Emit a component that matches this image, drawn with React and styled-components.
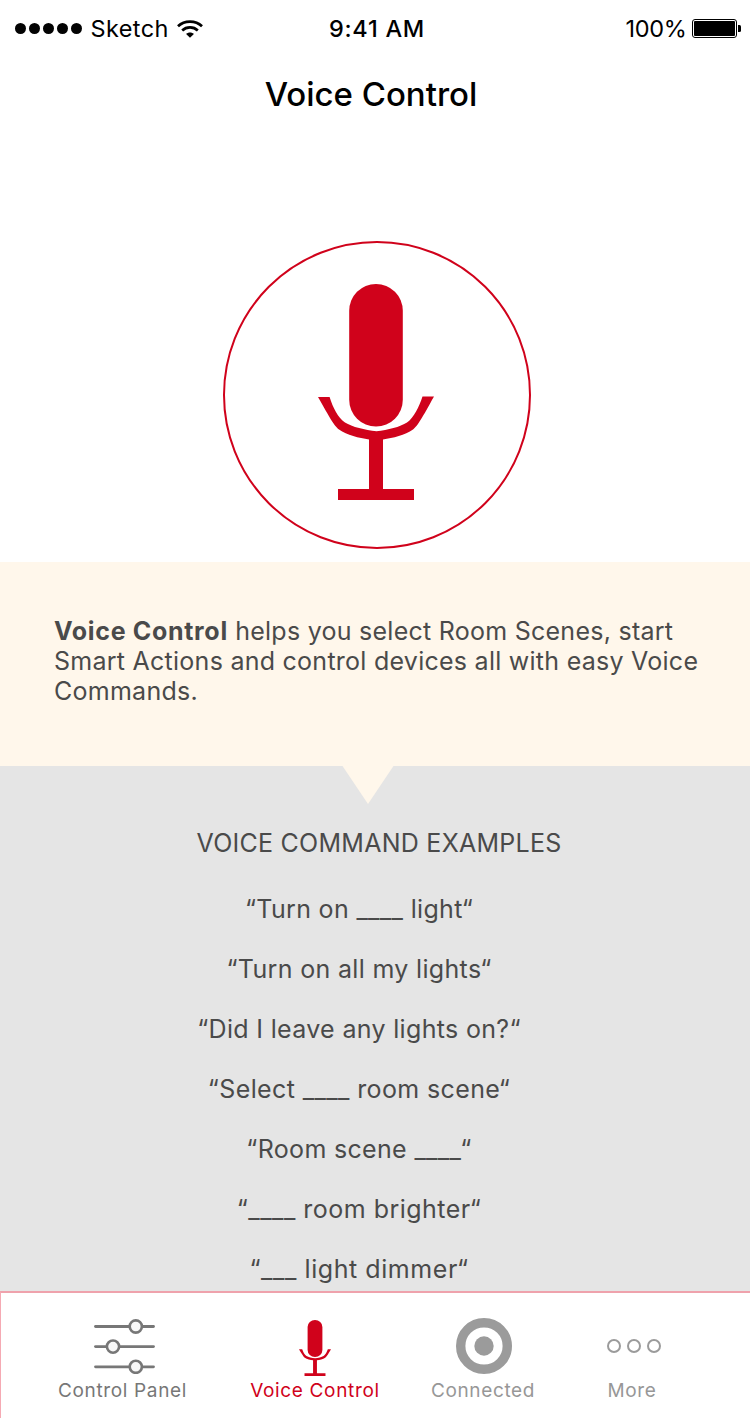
import React from "react";
import styled, { createGlobalStyle } from "styled-components";

const RED = "#d0021b";

const GlobalStyle = createGlobalStyle`
  * { box-sizing: border-box; }
  body { margin: 0; background: #fff; }
`;

const Screen = styled.div`
  width: 750px;
  height: 1418px;
  display: flex;
  flex-direction: column;
  overflow: hidden;
  background: #fff;
  color: #4a4a4a;
  font-family: Inter, "Liberation Sans", sans-serif;
`;

const StatusBar = styled.header`
  height: 57px;
  display: grid;
  grid-template-columns: 1fr auto 1fr;
  align-items: center;
  padding: 0 9px 0 15px;
  color: #000;
  font-size: 23.5px;
  line-height: 30px;
`;

const StatusGroup = styled.div`
  display: flex;
  align-items: center;
  justify-content: ${(p) => (p.$end ? "flex-end" : "flex-start")};
`;

const Signal = styled.div`
  display: flex;
  gap: 3px;
  margin-right: 8.5px;
`;

const SignalDot = styled.span`
  width: 11px;
  height: 11px;
  border-radius: 50%;
  background: #030303;
`;

const Carrier = styled.span`
  letter-spacing: 0.4px;
  margin-right: 8px;
`;

const Clock = styled.div`
  padding-right: 2px;
  font-weight: 550;
  letter-spacing: 0.75px;
`;

const Percent = styled.span`
  margin-right: 5.5px;
  letter-spacing: -0.3px;
`;

const Title = styled.h1`
  margin: 17px 0 0;
  padding-right: 8px;
  text-align: center;
  color: #000;
  font-size: 33px;
  font-weight: 550;
  line-height: 40px;
  letter-spacing: 0;
`;

const Hero = styled.section`
  height: 448px;
  display: flex;
  justify-content: center;
  align-items: flex-end;
  padding: 0 0 13px 4px;
`;

const MicButton = styled.button`
  width: 308px;
  height: 308px;
  display: flex;
  justify-content: center;
  align-items: flex-start;
  padding: 41px 2px 0 0;
  border: 2px solid ${RED};
  border-radius: 50%;
  background: none;
`;

const Intro = styled.section`
  position: relative;
  height: 204px;
  padding: 54px 40px 0 54px;
  background: #fff7eb;
  font-size: 25px;
  line-height: 30px;
`;

const IntroText = styled.p`
  margin: 0;
  letter-spacing: 0.26px;
  white-space: nowrap;

  strong { font-weight: 700; letter-spacing: 0.68px; }
`;

const Pointer = styled.svg`
  position: absolute;
  top: 100%;
  left: 342px;
  display: block;
`;

const Examples = styled.section`
  height: 525px;
  overflow: hidden;
  padding-top: 62px;
  background: #e5e5e5;
  font-size: 25px;
`;

const ExamplesTitle = styled.h2`
  margin: 0 0 21px;
  padding-left: 8px;
  text-align: center;
  font-size: 25px;
  font-weight: 400;
  line-height: 30px;
  letter-spacing: 0.26px;
`;

const ExampleList = styled.ul`
  margin: 0;
  padding: 0 32px 0 0;
  list-style: none;
  text-align: center;
`;

const Example = styled.li`
  height: 60px;
  line-height: 60px;
  letter-spacing: ${(p) => p.$spacing ?? 0.33}px;
`;

const TabBar = styled.nav`
  flex: 1;
  display: grid;
  grid-template-columns: 193px 192px 144px 154px;
  padding-left: 25px;
  border-top: 2px solid #efa2ac;
  border-left: 1px solid #f5aab3;
  background: #fff;
`;

const Tab = styled.a`
  display: flex;
  flex-direction: column;
  align-items: center;
  padding-top: 25px;
  color: ${(p) => p.$color};
  font-size: 19px;
  line-height: 24px;
  letter-spacing: 0.65px;
`;

const TabIcon = styled.span`
  height: 61px;
  display: flex;
  align-items: flex-start;
  justify-content: center;
  padding: ${(p) => p.$inset};

  svg { display: block; }
`;

const MicIcon = ({ width, height }) => (
  <svg width={width} height={height} viewBox="0 0 116 216" preserveAspectRatio="none" fill={RED}>
    <rect x="31.2" y="0" width="53.6" height="142.5" rx="26.8" />
    <path d="M0 113H11.6C15 124 20 133.500 27 138.500C34 143 47 146 58.500 147.200C70 146 82 143 89 138.500C96 133.500 101 123 104.500 112.500H116C104 134 100 141.500 95 145.500C87 151 75 154 65 155.500V205H96V216H20V205H51V155.500C41 154 29 151 21 145.500C16 141.500 12 134 0 113Z" />
  </svg>
);

const WifiIcon = () => (
  <svg width="26" height="18" viewBox="0 0 26 18" fill="none" stroke="#000" strokeWidth="2.7">
    <path d="M1 6.300C7.500 0 18.500 0 25 6.300" />
    <path d="M5.200 10.500C9.600 6.400 16.400 6.400 20.800 10.500" />
    <path d="M9.100 14C11.200 12 14.800 12 16.900 14L13 17.800Z" fill="#000" stroke="none" />
  </svg>
);

const BatteryIcon = () => (
  <svg width="49" height="19" viewBox="0 0 49 19">
    <rect x=".5" y=".5" width="44" height="18" rx="2.500" fill="none" stroke="#000" />
    <rect x="2" y="2" width="41" height="15" rx="1" />
    <path d="M46 6H47.500Q49 6 49 7.500V11.500Q49 13 47.500 13H46Z" />
  </svg>
);

const SlidersIcon = () => (
  <svg width="62" height="56" viewBox="0 0 62 56" stroke="#777" fill="#f8f8f8" strokeLinecap="round">
    {[[8.5, 42.8], [28.6, 20], [48.8, 42.8]].map(([y, x]) => (
      <g key={y}>
        <path d={`M2.500 ${y}H60.500`} strokeWidth="2.800" />
        <circle cx={x} cy={y} r="6.100" strokeWidth="2.600" />
      </g>
    ))}
  </svg>
);

const TargetIcon = () => (
  <svg width="56" height="56" viewBox="0 0 56 56">
    <circle cx="28" cy="28" r="23.300" fill="none" stroke="#9b9b9b" strokeWidth="9.400" />
    <circle cx="28" cy="28" r="9.700" fill="#9b9b9b" />
  </svg>
);

const MoreIcon = () => (
  <svg width="56" height="56" viewBox="0 0 56 56" fill="none" stroke="#9b9b9b" strokeWidth="2">
    {[8, 28, 48].map((x) => (
      <circle key={x} cx={x} cy="28" r="6" />
    ))}
  </svg>
);

const EXAMPLES = [
  { text: "“Turn on ____ light“" },
  { text: "“Turn on all my lights“" },
  { text: "“Did I leave any lights on?“" },
  { text: "“Select ____ room scene“", spacing: 0.38 },
  { text: "“Room scene ____“" },
  { text: "“____ room brighter“", spacing: 0.48 },
  { text: "“___ light dimmer“", spacing: 0.56 },
];

const TABS = [
  { label: "Control Panel", color: "#777", icon: <SlidersIcon />, inset: "0 0 0 2px" },
  { label: "Voice Control", color: RED, icon: <MicIcon width={32} height={56} />, inset: "2px 0 0" },
  { label: "Connected", color: "#979797", icon: <TargetIcon />, inset: "0 0 0 2px" },
  { label: "More", color: "#979797", icon: <MoreIcon />, inset: "0 0 0 4px" },
];

export default function App() {
  return (
    <Screen>
      <GlobalStyle />
      <StatusBar>
        <StatusGroup>
          <Signal>
            {[0, 1, 2, 3, 4].map((i) => (
              <SignalDot key={i} />
            ))}
          </Signal>
          <Carrier>Sketch</Carrier>
          <WifiIcon />
        </StatusGroup>
        <Clock>9:41 AM</Clock>
        <StatusGroup $end>
          <Percent>100%</Percent>
          <BatteryIcon />
        </StatusGroup>
      </StatusBar>
      <Title>Voice Control</Title>
      <Hero>
        <MicButton aria-label="Start listening">
          <MicIcon width={116} height={216} />
        </MicButton>
      </Hero>
      <Intro>
        <IntroText>
          <strong>Voice Control</strong> helps you select Room Scenes, start
          <br />
          Smart Actions and control devices all with easy Voice
          <br />
          Commands.
        </IntroText>
        <Pointer width="52" height="38" viewBox="0 0 52 38">
          <path d="M.5 0H51.500L26 38Z" fill="#fff7eb" />
        </Pointer>
      </Intro>
      <Examples>
        <ExamplesTitle>VOICE COMMAND EXAMPLES</ExamplesTitle>
        <ExampleList>
          {EXAMPLES.map(({ text, spacing }) => (
            <Example key={text} $spacing={spacing}>{text}</Example>
          ))}
        </ExampleList>
      </Examples>
      <TabBar>
        {TABS.map(({ label, color, icon, inset }) => (
          <Tab key={label} $color={color}>
            <TabIcon $inset={inset}>{icon}</TabIcon>
            {label}
          </Tab>
        ))}
      </TabBar>
    </Screen>
  );
}
